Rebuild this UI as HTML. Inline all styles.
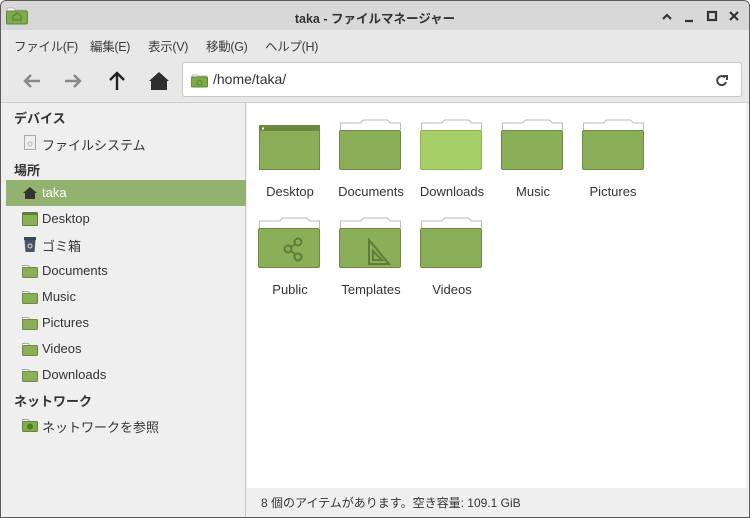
<!DOCTYPE html>
<html><head><meta charset="utf-8"><style>
*{margin:0;padding:0;box-sizing:border-box}
body{width:750px;height:518px;overflow:hidden;background:#fff;font-family:"Liberation Sans","Noto Sans CJK JP",sans-serif;font-size:13px;color:#333}
.win{position:absolute;left:0;top:0;width:750px;height:518px;border:1px solid #5a5a5a;border-radius:6px 6px 0 0;background:#efefef;overflow:hidden}
.title{position:absolute;left:0;top:0;width:748px;height:29px;background:#d8d8d8;}
.title .t{position:absolute;left:0;width:748px;top:7px;text-align:center;font-weight:bold;font-size:12.5px;color:#333}
.menu{position:absolute;top:29px;left:0;width:748px;height:28px;background:#e8e8e8}
.menu span{position:absolute;top:6px;font-size:12.5px;color:#3c3c3c;letter-spacing:-0.3px}
.tool{position:absolute;top:57px;left:0;width:748px;height:45px;background:#e8e8e8;border-bottom:1px solid #cfcfcf}
.addr{position:absolute;left:181px;top:4px;width:560px;height:35px;background:#fff;border:1px solid #c8c8c8;border-radius:3px}
.side{position:absolute;top:102px;left:0;width:245px;height:416px;background:#efefef;border-right:1px solid #c8c8c8}
.side .h{position:absolute;left:13px;font-weight:bold;font-size:13px;color:#333}
.side .i{position:absolute;left:41px;font-size:13px;color:#333}
.sel{position:absolute;left:5px;top:77px;width:240px;height:26px;background:#93b270}
.main{position:absolute;left:246px;top:102px;width:499px;height:385px;background:#fff}
.status{position:absolute;left:260px;top:493px;font-size:12px;color:#333}
.lab{position:absolute;width:80px;text-align:center;font-size:13px;color:#333}
</style></head><body>
<div class="win">
<div class="title">
<svg style="position:absolute;left:5px;top:4px" width="22" height="20"><path d="M1 3h7l1 2h11v14H1z" fill="#fff" stroke="#aaa" stroke-width="0.8"/><rect x="0.5" y="6" width="21" height="13" rx="1.5" fill="#7fab4a" stroke="#5f8a35"/><path d="M7 15v-4l4-3 4 3v4z" fill="none" stroke="#4f7a2a"/></svg>
<div class="t">taka - ファイルマネージャー</div>
<svg style="position:absolute;left:660px;top:8px" width="84" height="14" stroke="#333" stroke-width="2.2" fill="none"><path d="M2 10l4-4 4 4"/><path d="M24 12h8"/><rect x="47" y="3" width="8" height="8"/><path d="M69 3l8 8M77 3l-8 8"/></svg>
</div>
<div class="menu"><span style="left:13px">ファイル(F)</span><span style="left:89px">編集(E)</span><span style="left:147px">表示(V)</span><span style="left:205px">移動(G)</span><span style="left:264px">ヘルプ(H)</span></div>
<div class="tool">
<svg style="position:absolute;left:20px;top:12px" width="160" height="22"><g fill="none" stroke-width="2.4"><path d="M19 11H4M10 5l-6 6 6 6" stroke="#888"/><path d="M44 11h15M53 5l6 6-6 6" stroke="#888"/><path d="M96 20V4M89 10l7-7 7 7" stroke="#222"/></g><path d="M128 11l10-9 10 9h-2v9h-16v-9z" fill="#2e2e2e"/></svg>
<div class="addr">
<svg style="position:absolute;left:8px;top:10px" width="17" height="15"><path d="M1 2h5l1 1h9v11H1z" fill="#fff" stroke="#aaa" stroke-width=".7"/><rect x=".5" y="4" width="16" height="10" rx="1" fill="#7fab4a" stroke="#5f8a35"/><path d="M6 12V9l2.5-2 2.5 2v3z" fill="none" stroke="#4f7a2a" stroke-width=".8"/></svg>
<span style="position:absolute;left:30px;top:8px;font-size:14px;color:#333">/home/taka/</span>
<svg style="position:absolute;left:532px;top:11px" width="14" height="14" fill="none" stroke="#444" stroke-width="2"><path d="M11 8a4.5 4.5 0 1 1-1-4.5"/><path d="M8 2h4v4" /></svg>
</div>
</div>
<div class="side">
<div class="h" style="top:5px">デバイス</div>
<svg style="position:absolute;left:23px;top:32px" width="12" height="15"><rect x=".5" y=".5" width="11" height="14" fill="#eee" stroke="#aaa"/><circle cx="6" cy="9" r="2" fill="none" stroke="#bbb"/></svg>
<div class="i" style="top:32px">ファイルシステム</div>
<div class="h" style="top:57px">場所</div>
<div class="sel"></div>
<svg style="position:absolute;left:22px;top:83px" width="14" height="13"><path d="M0 7l7-6 7 6h-2v6H2V7z" fill="#333"/></svg>
<div class="i" style="top:82px;color:#fff">taka</div>
<svg style="position:absolute;left:21px;top:109px" width="16" height="14"><rect x=".5" y=".5" width="15" height="13" rx="1" fill="#8aaf58" stroke="#5f7f38"/><rect x="1" y="1" width="14" height="2" fill="#5f7f38"/></svg>
<div class="i" style="top:108px">Desktop</div>
<svg style="position:absolute;left:22px;top:134px" width="14" height="16"><rect x="1" y="0" width="12" height="3" fill="#3d4550"/><path d="M1.5 3h11l-1 12h-9z" fill="#4a535e"/><circle cx="7" cy="9" r="2" fill="none" stroke="#ddd"/></svg>
<div class="i" style="top:133px">ゴミ箱</div>
<div class="i" style="top:160px">Documents</div>
<div class="i" style="top:186px">Music</div>
<div class="i" style="top:212px">Pictures</div>
<div class="i" style="top:238px">Videos</div>
<div class="i" style="top:264px">Downloads</div>
<svg style="position:absolute;left:21px;top:161px" width="16" height="130">
<g fill="#8aaf58" stroke="#6b8b42"><path d="M.5 3.5v-2h6l1 2" fill="#fff" stroke="#aaa"/><rect x=".5" y="3.5" width="15" height="10" rx="1"/></g>
<g transform="translate(0,26)" fill="#8aaf58" stroke="#6b8b42"><path d="M.5 3.5v-2h6l1 2" fill="#fff" stroke="#aaa"/><rect x=".5" y="3.5" width="15" height="10" rx="1"/></g>
<g transform="translate(0,52)" fill="#8aaf58" stroke="#6b8b42"><path d="M.5 3.5v-2h6l1 2" fill="#fff" stroke="#aaa"/><rect x=".5" y="3.5" width="15" height="10" rx="1"/></g>
<g transform="translate(0,78)" fill="#8aaf58" stroke="#6b8b42"><path d="M.5 3.5v-2h6l1 2" fill="#fff" stroke="#aaa"/><rect x=".5" y="3.5" width="15" height="10" rx="1"/></g>
<g transform="translate(0,104)" fill="#8aaf58" stroke="#6b8b42"><path d="M.5 3.5v-2h6l1 2" fill="#fff" stroke="#aaa"/><rect x=".5" y="3.5" width="15" height="10" rx="1"/></g>
</svg>
<div class="h" style="top:288px">ネットワーク</div>
<svg style="position:absolute;left:21px;top:315px" width="16" height="14"><path d="M.5 3.5v-2h6l1 2" fill="#fff" stroke="#aaa"/><rect x=".5" y="3.5" width="15" height="10" rx="1" fill="#7fab4a" stroke="#5f8a35"/><circle cx="8" cy="8.5" r="3" fill="#4f7a2a"/></svg>
<div class="i" style="top:314px">ネットワークを参照</div>
</div>
<div class="main">
<svg style="position:absolute;left:0;top:0" width="499" height="180">
<defs><g id="f"><path d="M2.5 27V20h20l3-3h24l3 3h10v7" fill="#fff" stroke="#bbb"/><rect x="1.5" y="27.5" width="61" height="39" rx="1.5" fill="#8aaf58" stroke="#6b8b42"/></g></defs>
<rect x="12.5" y="22.5" width="60" height="44" fill="#8aaf58" stroke="#6b8b42"/><rect x="13" y="23" width="59" height="5" fill="#6a8840"/><rect x="15" y="24.5" width="2" height="2" fill="#fff"/>
<use href="#f" x="91" y="0"/>
<g transform="translate(172,0)"><path d="M2.5 27V20h20l3-3h24l3 3h10v7" fill="#fff" stroke="#bbb"/><rect x="1.5" y="27.5" width="61" height="39" rx="1.5" fill="#a6cf68" stroke="#8cb354"/></g>
<use href="#f" x="253" y="0"/>
<use href="#f" x="334" y="0"/>
<use href="#f" x="10" y="98"/>
<use href="#f" x="91" y="98"/>
<use href="#f" x="172" y="98"/>
<g fill="none" stroke="#5d7d38" stroke-width="2"><circle cx="51" cy="139" r="3.5"/><circle cx="41" cy="146" r="3.5"/><circle cx="51" cy="154" r="3.5"/><path d="M44 144l4-3M44 148l4 3"/><path d="M122 137v24h20z M126 148v9h9z"/></g>
</svg>
<div class="lab" style="left:3px;top:81px">Desktop</div>
<div class="lab" style="left:84px;top:81px">Documents</div>
<div class="lab" style="left:165px;top:81px">Downloads</div>
<div class="lab" style="left:246px;top:81px">Music</div>
<div class="lab" style="left:326px;top:81px">Pictures</div>
<div class="lab" style="left:3px;top:179px">Public</div>
<div class="lab" style="left:84px;top:179px">Templates</div>
<div class="lab" style="left:165px;top:179px">Videos</div>
</div>
<div style="position:absolute;left:745px;top:102px;width:3px;height:416px;background:#efefef"></div>
<div class="status">8 個のアイテムがあります。空き容量: 109.1 GiB</div>
</div>
</body></html>
